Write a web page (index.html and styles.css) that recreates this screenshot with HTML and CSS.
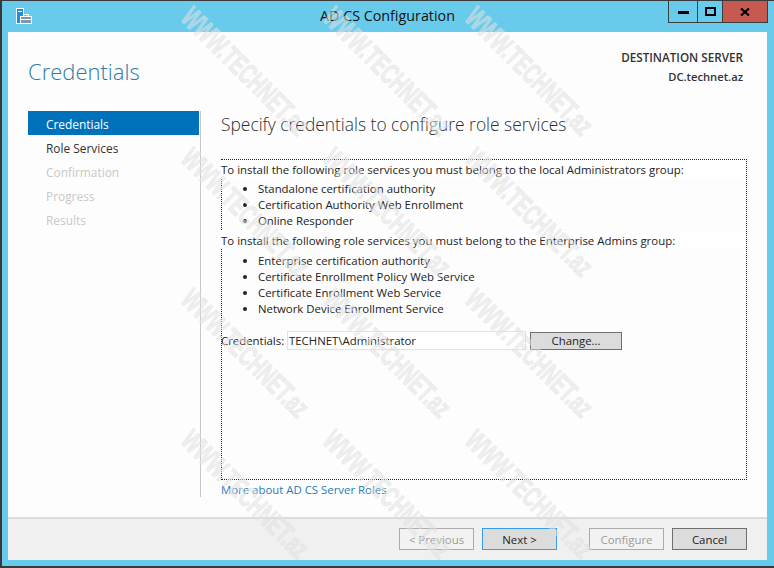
FILE: index.html
```html
<!DOCTYPE html>
<html lang="en">
<head>
<meta charset="utf-8">
<title>AD CS Configuration</title>
<link rel="stylesheet" href="styles.css">
</head>
<body>
<div class="window">
  <header class="titlebar">
    <svg class="app-icon" width="16" height="17" viewBox="0 0 16 17">
      <rect x="0.5" y="0.5" width="7" height="15" fill="#1f8fd8" stroke="#fff"/>
      <rect x="2" y="3" width="4" height="1" fill="#fff"/>
      <rect x="4.5" y="8.5" width="11" height="7" fill="#7f97a8" stroke="#fff"/>
      <path d="M7.5 8V6.5h5V8" fill="none" stroke="#fff"/>
      <rect x="5" y="11" width="10" height="1" fill="#fff"/>
    </svg>
    <h1 class="title">AD CS Configuration</h1>
    <div class="controls">
      <div class="ctl ctl-min"><svg width="11" height="4"><rect width="11" height="3" y="1" fill="#000"/></svg></div>
      <div class="ctl ctl-max"><svg width="11" height="9"><rect x="1" y="1" width="9" height="7" fill="none" stroke="#000" stroke-width="2"/></svg></div>
      <div class="ctl ctl-close"><svg width="10" height="8" viewBox="0 0 10 8"><path d="M1 0.5L9 7.5M9 0.5L1 7.5" stroke="#000" stroke-width="2.2" fill="none"/></svg></div>
    </div>
  </header>
  <div class="client">
    <div class="main">
      <div class="top">
        <h2 class="page-title">Credentials</h2>
        <div class="dest">
          <div class="dest-label">DESTINATION SERVER</div>
          <div class="dest-name">DC.technet.az</div>
        </div>
      </div>
      <div class="panes">
        <nav class="nav">
          <div class="nav-item active">Credentials</div>
          <div class="nav-item">Role Services</div>
          <div class="nav-item off">Confirmation</div>
          <div class="nav-item off">Progress</div>
          <div class="nav-item off">Results</div>
        </nav>
        <section class="content">
          <h3 class="heading">Specify credentials to configure role services</h3>
          <div class="dotted">
            <p class="lead">To install the following role services you must belong to the local Administrators group:</p>
            <ul class="roles">
              <li>Standalone certification authority</li>
              <li>Certification Authority Web Enrollment</li>
              <li>Online Responder</li>
            </ul>
            <p class="lead">To install the following role services you must belong to the Enterprise Admins group:</p>
            <ul class="roles roles-second">
              <li>Enterprise certification authority</li>
              <li>Certificate Enrollment Policy Web Service</li>
              <li>Certificate Enrollment Web Service</li>
              <li>Network Device Enrollment Service</li>
            </ul>
            <div class="cred-row">
              <span class="cred-label">Credentials:</span>
              <div class="cred-input">TECHNET\Administrator</div>
              <div class="btn btn-change">Change...</div>
            </div>
          </div>
          <a class="more">More about AD CS Server Roles</a>
        </section>
      </div>
    </div>
    <footer class="footer">
      <div class="btn btn-off">&lt; Previous</div>
      <div class="btn btn-next">Next &gt;</div>
      <div class="btn btn-off btn-gap">Configure</div>
      <div class="btn btn-cancel">Cancel</div>
    </footer>
  </div>
  <div class="watermarks" aria-hidden="true">
    <span>WWW.TECHNET.az</span><span>WWW.TECHNET.az</span><span>WWW.TECHNET.az</span>
    <span>WWW.TECHNET.az</span><span>WWW.TECHNET.az</span><span>WWW.TECHNET.az</span>
    <span>WWW.TECHNET.az</span><span>WWW.TECHNET.az</span><span>WWW.TECHNET.az</span>
    <span>WWW.TECHNET.az</span><span>WWW.TECHNET.az</span><span>WWW.TECHNET.az</span>
  </div>
</div>
</body>
</html>
```
FILE: styles.css
```css
* { box-sizing: border-box; }
html, body { margin: 0; padding: 0; }
body { width: 774px; height: 568px; overflow: hidden; font-family: "Open Sans", "Noto Sans", sans-serif; font-size: 11.4px; color: #222; }
.window { position: relative; width: 774px; height: 568px; background: #69cbec; border: 1px solid #3a3a3a; border-width: 1px 0 2px 2px; padding: 0 7px 6px 6px; display: flex; flex-direction: column; overflow: hidden; }
.titlebar { position: relative; height: 31px; flex: none; display: flex; justify-content: center; align-items: flex-start; }
.app-icon { position: absolute; left: 8px; top: 7px; }
.title { margin: 0; padding-top: 5px; font-size: 14.3px; line-height: 19px; font-weight: 400; color: #111; }
.controls { position: absolute; right: -1px; top: 0; display: flex; height: 22px; border: 1px solid #3d3d3d; border-top: 0; }
.ctl { display: flex; align-items: center; justify-content: center; }
.ctl-min { width: 29px; border-right: 1px solid #3d3d3d; }
.ctl-max { width: 25px; border-right: 1px solid #3d3d3d; }
.ctl-close { width: 44px; background: #c75a50; }
.client { flex: 1; background: #fdfdfd; display: flex; flex-direction: column; min-height: 0; }
.main { flex: 1; min-height: 0; padding: 0 20px; display: flex; flex-direction: column; }
.top { height: 79px; flex: none; display: flex; justify-content: space-between; }
.page-title { margin: 24px 0 0; font-size: 22px; line-height: 30px; font-weight: 300; color: #2b7ca0; }
.dest { padding: 16px 4px 0 0; text-align: right; font-weight: 600; font-size: 11.7px; color: #333; }
.dest-label { line-height: 18px; margin-bottom: 2px; }
.dest-name { line-height: 18px; font-size: 11.2px; }
.panes { flex: 1; display: flex; min-height: 0; }
.nav { width: 173px; height: 386px; border-right: 1px solid #c8c8c8; flex: none; font-size: 11.9px; }
.nav-item { width: 171px; height: 24px; line-height: 26px; padding-left: 18px; color: #333; }
.nav-item.active { background: #0072bc; color: #fff; }
.nav-item.off { color: #c8c8c8; }
.content { flex: 1; padding-left: 20px; min-width: 0; }
.heading { margin: 0; padding-top: 1px; font-size: 17.4px; line-height: 24px; font-weight: 300; color: #2e2e2e; }
.dotted { margin-top: 23px; height: 321px; border: 1px dotted #222; display: flex; flex-direction: column; }
.lead { margin: 0 0 0 -1px; height: 18px; line-height: 19px; background: #fff; font-size: 11.45px; }
.roles { margin: 0; padding: 3px 0 2px 36px; list-style: disc; }
.roles-second { padding-top: 4px; }
.roles li { height: 16px; line-height: 16px; }
.cred-row { display: flex; align-items: center; margin-top: 12px; height: 19px; margin-left: -1px; }
.cred-label { width: 66px; }
.cred-input { width: 239px; height: 19px; line-height: 17px; padding-left: 1px; border: 1px solid #e2e2e2; background: #fff; font-size: 11.4px; }
.btn { width: 75px; height: 22px; display: flex; align-items: center; justify-content: center; border: 1px solid #707070; background: #dcdcdc; color: #222; }
.btn-change { width: 92px; height: 18px; margin-left: 4px; }
.more { display: block; margin-top: 1px; line-height: 18px; color: #2a7ab8; }
.footer { height: 43px; flex: none; background: #f0f0f0; border-top: 2px solid #dcdcdc; padding: 9px 20px 0 0; display: flex; justify-content: flex-end; gap: 8px; }
.btn-off { border-color: #ababab; background: #f2f2f2; color: #9b9b9b; }
.btn-next { border-color: #3a9cf0; }
.btn-gap { margin-left: 24px; }
.watermarks { position: absolute; left: 172px; top: 0; display: grid; grid-template-columns: repeat(3, 142px); grid-auto-rows: 141px; pointer-events: none; }
.watermarks span { justify-self: center; display: flex; align-items: center; justify-content: center; width: 330px; height: 141px; white-space: nowrap; transform: rotate(45deg) scaleX(0.64); font-family: "Liberation Sans", sans-serif; font-weight: 700; font-size: 29px; -webkit-text-stroke: 1.2px rgba(225,225,225,0.45); color: rgba(225,225,225,0.5); }
```
